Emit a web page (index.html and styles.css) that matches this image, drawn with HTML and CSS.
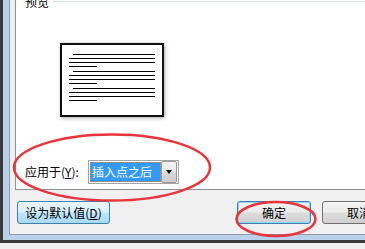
FILE: index.html
```html
<!DOCTYPE html>
<html lang="zh-CN">

<head>
    <meta charset="UTF-8">
    <title>页面设置</title>
    <link rel="stylesheet" href="styles.css">
</head>

<body>
    <div class="window">
        <div class="dialog">
            <!-- 预览 -->
            <div class="page">
                <div class="group-head">
                    <span class="group-title">预览</span>
                    <span class="group-line"></span>
                </div>

                <div class="preview">
                    <div class="para">
                        <div class="line first"></div>
                        <div class="line"></div>
                        <div class="line"></div>
                        <div class="line short"></div>
                    </div>
                    <div class="para">
                        <div class="line first"></div>
                        <div class="line"></div>
                        <div class="line"></div>
                        <div class="line short"></div>
                    </div>
                    <div class="para">
                        <div class="line first"></div>
                        <div class="line"></div>
                        <div class="line"></div>
                        <div class="line short"></div>
                    </div>
                </div>

                <div class="apply-row">
                    <span class="apply-label">应用于(<u>Y</u>):</span>
                    <div class="combo">
                        <span class="combo-value">插入点之后</span>
                        <span class="combo-btn"><span class="arrow"></span></span>
                    </div>
                </div>
            </div>

            <div class="button-row">
                <button class="btn btn-hot">设为默认值(<u>D</u>)</button>
                <button class="btn btn-default">确定</button>
                <button class="btn">取消</button>
            </div>
        </div>
    </div>

    <!-- 红圈标注 -->
    <svg class="marks" width="365" height="249" viewBox="0 0 365 249">
        <ellipse cx="112" cy="167.5" rx="98" ry="33" fill="none" stroke="#e8353b" stroke-width="2.5" />
        <ellipse cx="276" cy="219" rx="39.5" ry="17" fill="none" stroke="#e8353b" stroke-width="2.5" />
    </svg>
</body>

</html>
```

FILE: styles.css
```css
body {
    margin: 0;
    width: 365px;
    height: 249px;
    overflow: hidden;
    position: relative;
    font-family: "Noto Sans CJK SC", "Noto Sans", sans-serif;
    font-size: 12px;
    color: #000;
    background: #f0f0f0;
}

.window {
    width: 430px;
    height: 249px;
    box-sizing: border-box;
    border-left: 3px solid #3a3a3a;
    border-bottom: 3px solid #3a3a3a;
    padding: 0 0 5px 6px;
    background: #b9d1ea;
}

.dialog {
    height: 100%;
    box-sizing: border-box;
    background: #f0f0f0;
    border-left: 1px solid #8c9aaa;
    border-bottom: 1px solid #8c9aaa;
    padding-left: 5px;
}

.page {
    height: 195px;
    background: #fff;
    border-left: 1px solid #8e9196;
    border-bottom: 1px solid #8e9196;
}

.group-head {
    display: flex;
    align-items: center;
    margin-top: -6px;
    height: 16px;
    padding-left: 9px;
}

.group-title {
    line-height: 16px;
    margin-right: 4px;
}

.group-line {
    flex: 1;
    border-top: 1px solid #d5dfe5;
    border-bottom: 1px solid #fff;
}

.preview {
    width: 100px;
    height: 70px;
    margin: 33px 0 0 44px;
    padding: 9px 7px 0;
    box-sizing: content-box;
    border: 2px solid #111;
    background: #fff;
    box-shadow: 1px 1px 4px rgba(0, 0, 0, 0.35);
    box-sizing: border-box;
    width: 104px;
    height: 74px;
}

.para {
    margin-bottom: 4px;
}

.line {
    height: 1px;
    background: #000;
    margin-bottom: 3px;
}

.line.first {
    margin-left: 4px;
}

.line.short {
    width: 28px;
}

.apply-row {
    display: flex;
    align-items: center;
    margin: 43px 0 0 9px;
}

.apply-label {
    width: 63px;
    line-height: 16px;
}

.combo {
    display: flex;
    width: 91px;
    height: 24px;
    box-sizing: border-box;
    border: 1px solid #a5a5a5;
    padding: 1px;
    background: #fff;
}

.combo-value {
    width: 73px;
    box-sizing: border-box;
    background: #3399ff;
    color: #fff;
    border: 1px dotted #e08a2a;
    padding-left: 1px;
    line-height: 18px;
}

.combo-btn {
    display: flex;
    align-items: center;
    justify-content: center;
    width: 16px;
    margin: -1px 0 -1px 0;
    box-sizing: border-box;
    border: 1px solid #9a9a9a;
    border-radius: 2px;
    background: linear-gradient(#f4f4f4, #e6e6e6 50%, #d8d8d8 50%, #cccccc);
}

.arrow {
    width: 0;
    height: 0;
    border-left: 3.5px solid transparent;
    border-right: 3.5px solid transparent;
    border-top: 4px solid #000;
}

.button-row {
    display: flex;
    margin: 11px 0 0 2px;
}

.btn {
    height: 23px;
    width: 74px;
    padding: 0;
    font-family: inherit;
    font-size: 12px;
    color: #000;
    border: 1px solid #707070;
    border-radius: 3px;
    background: linear-gradient(#f2f2f2, #ebebeb 48%, #dddddd 52%, #cfcfcf);
    flex-shrink: 0;
}

.btn-hot {
    width: 93px;
    border-color: #3c7fb1;
    background: linear-gradient(#eaf6fd, #d9f0fc 48%, #bee6fd 52%, #a7d9f5);
    margin-right: 127px;
}

.btn-default {
    border-color: #3c7fb1;
    box-shadow: inset 0 0 0 1px #8fd9f8;
    margin-right: 11px;
}

.marks {
    position: absolute;
    top: 0;
    left: 0;
}
```
